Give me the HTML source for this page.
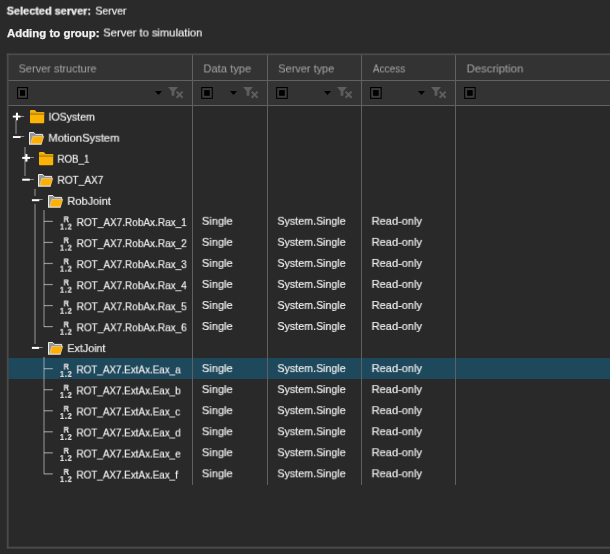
<!DOCTYPE html><html><head><meta charset='utf-8'><title>Server structure</title><style>
html,body{margin:0;padding:0;}
body{width:610px;height:554px;background:#2a2a2a;overflow:hidden;position:relative;font-family:"Liberation Sans",sans-serif;font-size:12px;color:#f1f1f1;}
.a{position:absolute;}
.t{position:absolute;left:0;top:0;will-change:transform;white-space:nowrap;font-size:11.4px;line-height:14px;height:14px;transform-origin:0 0;-webkit-text-stroke:0.18px currentColor;}
.b{font-weight:bold;-webkit-text-stroke:0.25px #f1f1f1;}
.h{color:#a8a8a8;-webkit-text-stroke:0;}
.ln{position:absolute;background:#606060;}
.tl{position:absolute;background:#989898;}.tx{position:absolute;background:#808080;}.vl{position:absolute;background:rgba(255,255,255,0.26);}
.w{position:absolute;background:#ffffff;}
.cb{position:absolute;width:9px;height:10px;border:1px solid #000;background:#3e3e3e;}
.cb i{position:absolute;left:2px;top:2px;width:5px;height:6px;background:#000;}
.ic{position:absolute;left:0;top:0;transform-origin:0 0;will-change:transform;font-weight:bold;font-size:8px;line-height:8px;color:#e6e6e6;white-space:nowrap;text-shadow:0 0 1px #000;-webkit-text-stroke:0.2px #e6e6e6;}
</style></head><body>
<span class='t b' style='transform:translate(6.73px,3.60px) scaleX(0.9578)'>Selected server:</span>
<span class='t ' style='transform:translate(95.38px,3.60px) scaleX(0.9253)'>Server</span>
<span class='t b' style='transform:translate(6.91px,25.50px) scaleX(1.0033)'>Adding to group:</span>
<span class='t ' style='transform:translate(103.23px,25.50px) scaleX(0.9847)'>Server to simulation</span>
<div class='a' style='left:7px;top:54px;width:603px;height:495px;background:#292929'></div>
<div class='a' style='left:7px;top:54px;width:603px;height:52px;background:#333333'></div>
<div class='ln' style='left:7px;top:80px;width:603px;height:1px'></div>
<div class='ln' style='left:7px;top:105px;width:603px;height:1px'></div>
<div class='a' style='left:8px;top:358px;width:602px;height:21px;background:#1e485c'></div>
<div class='ln' style='left:192px;top:54px;width:1px;height:431px'></div>
<div class='ln' style='left:267px;top:54px;width:1px;height:431px'></div>
<div class='ln' style='left:361px;top:54px;width:1px;height:431px'></div>
<div class='ln' style='left:455px;top:54px;width:1px;height:431px'></div>
<span class='t h' style='transform:translate(18.62px,61.40px) scaleX(0.9602)'>Server structure</span>
<span class='t h' style='transform:translate(203.40px,61.40px) scaleX(0.9793)'>Data type</span>
<span class='t h' style='transform:translate(278.28px,61.40px) scaleX(0.9604)'>Server type</span>
<span class='t h' style='transform:translate(372.82px,61.40px) scaleX(0.8845)'>Access</span>
<span class='t h' style='transform:translate(466.60px,61.40px) scaleX(0.9948)'>Description</span>
<svg class='a' style='left:155px;top:91px' width='7' height='4' viewBox='0 0 7 4'><path d='M0 0H7L3.5 4Z' fill='#000'/></svg>
<svg class='a' style='left:168px;top:87px' width='16' height='12' viewBox='0 0 16 12'><path d='M0 0H10L6.4 4.2V8.8H3.6V4.2Z' fill='#5e5e5e'/><path d='M8.6 4.6L14.6 10.8M14.6 4.6L8.6 10.8' stroke='#5e5e5e' stroke-width='2' fill='none'/></svg>
<svg class='a' style='left:230px;top:91px' width='7' height='4' viewBox='0 0 7 4'><path d='M0 0H7L3.5 4Z' fill='#000'/></svg>
<svg class='a' style='left:243px;top:87px' width='16' height='12' viewBox='0 0 16 12'><path d='M0 0H10L6.4 4.2V8.8H3.6V4.2Z' fill='#5e5e5e'/><path d='M8.6 4.6L14.6 10.8M14.6 4.6L8.6 10.8' stroke='#5e5e5e' stroke-width='2' fill='none'/></svg>
<svg class='a' style='left:324px;top:91px' width='7' height='4' viewBox='0 0 7 4'><path d='M0 0H7L3.5 4Z' fill='#000'/></svg>
<svg class='a' style='left:337px;top:87px' width='16' height='12' viewBox='0 0 16 12'><path d='M0 0H10L6.4 4.2V8.8H3.6V4.2Z' fill='#5e5e5e'/><path d='M8.6 4.6L14.6 10.8M14.6 4.6L8.6 10.8' stroke='#5e5e5e' stroke-width='2' fill='none'/></svg>
<svg class='a' style='left:418px;top:91px' width='7' height='4' viewBox='0 0 7 4'><path d='M0 0H7L3.5 4Z' fill='#000'/></svg>
<svg class='a' style='left:431px;top:87px' width='16' height='12' viewBox='0 0 16 12'><path d='M0 0H10L6.4 4.2V8.8H3.6V4.2Z' fill='#5e5e5e'/><path d='M8.6 4.6L14.6 10.8M14.6 4.6L8.6 10.8' stroke='#5e5e5e' stroke-width='2' fill='none'/></svg>
<div class='vl' style='left:15px;top:120px;width:2px;height:14px'></div>
<div class='vl' style='left:24px;top:147px;width:2px;height:29px'></div>
<div class='vl' style='left:34px;top:189px;width:2px;height:7px'></div>
<div class='vl' style='left:34px;top:204px;width:2px;height:140px'></div>
<div class='vl' style='left:43px;top:210px;width:2px;height:117px'></div>
<div class='vl' style='left:43px;top:357px;width:2px;height:117px'></div>
<svg class='a' style='left:29.8px;top:109.9px' width='15' height='14' viewBox='0 0 15 14'><path d='M0 1Q0 0 1 0H4.7L6.7 2H13.2Q14.2 2 14.2 3V12.2Q14.2 13.2 13.2 13.2H1Q0 13.2 0 12.2Z' fill='#fdb206'/><rect x='0' y='2.2' width='14.2' height='1.1' fill='#e6a404'/><rect x='0' y='3.3' width='14.2' height='1.7' fill='#bd8d10'/></svg>
<span class='t ' style='transform:translate(48.47px,109.67px) scaleX(0.9275)'>IOSystem</span>
<svg class='a' style='left:29.0px;top:131.5px' width='16' height='14' viewBox='0 0 16 14'><path d='M0.5 12.2V0.5H4.8L6.6 2.4H13.7V4.6L12.8 12.2Z' fill='#969696'/><path d='M0.5 12.4V0.5H4.8L6.6 2.4H13.7V4.6' fill='none' stroke='#ececec' stroke-width='1' stroke-linejoin='round'/><path d='M0.2 12.2H12.6' stroke='#e4e4ec' stroke-width='1'/><path d='M3.9 4.4H14.8L12.5 11.7H1.7Z' fill='#ffb000' stroke='#f3e6c6' stroke-width='0.5'/></svg>
<span class='t ' style='transform:translate(48.40px,130.71px) scaleX(0.9841)'>MotionSystem</span>
<svg class='a' style='left:39.2px;top:152.0px' width='15' height='14' viewBox='0 0 15 14'><path d='M0 1Q0 0 1 0H4.7L6.7 2H13.2Q14.2 2 14.2 3V12.2Q14.2 13.2 13.2 13.2H1Q0 13.2 0 12.2Z' fill='#fdb206'/><rect x='0' y='2.2' width='14.2' height='1.1' fill='#e6a404'/><rect x='0' y='3.3' width='14.2' height='1.7' fill='#bd8d10'/></svg>
<span class='t ' style='transform:translate(57.50px,151.75px) scaleX(0.8549)'>ROB_1</span>
<svg class='a' style='left:38.4px;top:173.6px' width='16' height='14' viewBox='0 0 16 14'><path d='M0.5 12.2V0.5H4.8L6.6 2.4H13.7V4.6L12.8 12.2Z' fill='#969696'/><path d='M0.5 12.4V0.5H4.8L6.6 2.4H13.7V4.6' fill='none' stroke='#ececec' stroke-width='1' stroke-linejoin='round'/><path d='M0.2 12.2H12.6' stroke='#e4e4ec' stroke-width='1'/><path d='M3.9 4.4H14.8L12.5 11.7H1.7Z' fill='#ffb000' stroke='#f3e6c6' stroke-width='0.5'/></svg>
<span class='t ' style='transform:translate(57.50px,172.79px) scaleX(0.8827)'>ROT_AX7</span>
<svg class='a' style='left:47.8px;top:194.6px' width='16' height='14' viewBox='0 0 16 14'><path d='M0.5 12.2V0.5H4.8L6.6 2.4H13.7V4.6L12.8 12.2Z' fill='#969696'/><path d='M0.5 12.4V0.5H4.8L6.6 2.4H13.7V4.6' fill='none' stroke='#ececec' stroke-width='1' stroke-linejoin='round'/><path d='M0.2 12.2H12.6' stroke='#e4e4ec' stroke-width='1'/><path d='M3.9 4.4H14.8L12.5 11.7H1.7Z' fill='#ffb000' stroke='#f3e6c6' stroke-width='0.5'/></svg>
<span class='t ' style='transform:translate(67.40px,193.83px) scaleX(0.9659)'>RobJoint</span>
<span class='ic' style='font-size:8.5px;transform:translate(63.6px,215.30px) scaleX(0.86)'>R</span>
<span class='ic' style='font-size:8.5px;letter-spacing:0.9px;transform:translate(59.9px,222.60px) scaleX(0.86)'>1.2</span>
<span class='t ' style='transform:translate(76.66px,215.10px) scaleX(0.8782)'>ROT_AX7.RobAx.Rax_1</span>
<span class='t ' style='transform:translate(201.80px,213.80px) scaleX(0.9789)'>Single</span>
<span class='t ' style='transform:translate(277.44px,213.80px) scaleX(0.9364)'>System.Single</span>
<span class='t ' style='transform:translate(371.65px,213.80px) scaleX(0.9704)'>Read-only</span>
<span class='ic' style='font-size:8.5px;transform:translate(63.6px,236.34px) scaleX(0.86)'>R</span>
<span class='ic' style='font-size:8.5px;letter-spacing:0.9px;transform:translate(59.9px,243.64px) scaleX(0.86)'>1.2</span>
<span class='t ' style='transform:translate(76.66px,236.14px) scaleX(0.8782)'>ROT_AX7.RobAx.Rax_2</span>
<span class='t ' style='transform:translate(201.80px,234.84px) scaleX(0.9789)'>Single</span>
<span class='t ' style='transform:translate(277.44px,234.84px) scaleX(0.9364)'>System.Single</span>
<span class='t ' style='transform:translate(371.65px,234.84px) scaleX(0.9704)'>Read-only</span>
<span class='ic' style='font-size:8.5px;transform:translate(63.6px,257.38px) scaleX(0.86)'>R</span>
<span class='ic' style='font-size:8.5px;letter-spacing:0.9px;transform:translate(59.9px,264.68px) scaleX(0.86)'>1.2</span>
<span class='t ' style='transform:translate(76.66px,257.18px) scaleX(0.8782)'>ROT_AX7.RobAx.Rax_3</span>
<span class='t ' style='transform:translate(201.80px,255.88px) scaleX(0.9789)'>Single</span>
<span class='t ' style='transform:translate(277.44px,255.88px) scaleX(0.9364)'>System.Single</span>
<span class='t ' style='transform:translate(371.65px,255.88px) scaleX(0.9704)'>Read-only</span>
<span class='ic' style='font-size:8.5px;transform:translate(63.6px,278.42px) scaleX(0.86)'>R</span>
<span class='ic' style='font-size:8.5px;letter-spacing:0.9px;transform:translate(59.9px,285.72px) scaleX(0.86)'>1.2</span>
<span class='t ' style='transform:translate(76.66px,278.22px) scaleX(0.8782)'>ROT_AX7.RobAx.Rax_4</span>
<span class='t ' style='transform:translate(201.80px,276.92px) scaleX(0.9789)'>Single</span>
<span class='t ' style='transform:translate(277.44px,276.92px) scaleX(0.9364)'>System.Single</span>
<span class='t ' style='transform:translate(371.65px,276.92px) scaleX(0.9704)'>Read-only</span>
<span class='ic' style='font-size:8.5px;transform:translate(63.6px,299.46px) scaleX(0.86)'>R</span>
<span class='ic' style='font-size:8.5px;letter-spacing:0.9px;transform:translate(59.9px,306.76px) scaleX(0.86)'>1.2</span>
<span class='t ' style='transform:translate(76.66px,299.26px) scaleX(0.8782)'>ROT_AX7.RobAx.Rax_5</span>
<span class='t ' style='transform:translate(201.80px,297.96px) scaleX(0.9789)'>Single</span>
<span class='t ' style='transform:translate(277.44px,297.96px) scaleX(0.9364)'>System.Single</span>
<span class='t ' style='transform:translate(371.65px,297.96px) scaleX(0.9704)'>Read-only</span>
<span class='ic' style='font-size:8.5px;transform:translate(63.6px,320.50px) scaleX(0.86)'>R</span>
<span class='ic' style='font-size:8.5px;letter-spacing:0.9px;transform:translate(59.9px,327.80px) scaleX(0.86)'>1.2</span>
<span class='t ' style='transform:translate(76.66px,320.30px) scaleX(0.8782)'>ROT_AX7.RobAx.Rax_6</span>
<span class='t ' style='transform:translate(201.80px,319.00px) scaleX(0.9789)'>Single</span>
<span class='t ' style='transform:translate(277.44px,319.00px) scaleX(0.9364)'>System.Single</span>
<span class='t ' style='transform:translate(371.65px,319.00px) scaleX(0.9704)'>Read-only</span>
<svg class='a' style='left:47.8px;top:341.9px' width='16' height='14' viewBox='0 0 16 14'><path d='M0.5 12.2V0.5H4.8L6.6 2.4H13.7V4.6L12.8 12.2Z' fill='#969696'/><path d='M0.5 12.4V0.5H4.8L6.6 2.4H13.7V4.6' fill='none' stroke='#ececec' stroke-width='1' stroke-linejoin='round'/><path d='M0.2 12.2H12.6' stroke='#e4e4ec' stroke-width='1'/><path d='M3.9 4.4H14.8L12.5 11.7H1.7Z' fill='#ffb000' stroke='#f3e6c6' stroke-width='0.5'/></svg>
<span class='t ' style='transform:translate(67.40px,341.11px) scaleX(0.9379)'>ExtJoint</span>
<span class='ic' style='font-size:8.5px;transform:translate(63.6px,362.58px) scaleX(0.86)'>R</span>
<span class='ic' style='font-size:8.5px;letter-spacing:0.9px;transform:translate(59.9px,369.88px) scaleX(0.86)'>1.2</span>
<span class='t ' style='transform:translate(76.52px,362.38px) scaleX(0.8658)'>ROT_AX7.ExtAx.Eax_a</span>
<span class='t ' style='transform:translate(201.80px,361.08px) scaleX(0.9789)'>Single</span>
<span class='t ' style='transform:translate(277.44px,361.08px) scaleX(0.9364)'>System.Single</span>
<span class='t ' style='transform:translate(371.65px,361.08px) scaleX(0.9704)'>Read-only</span>
<span class='ic' style='font-size:8.5px;transform:translate(63.6px,383.62px) scaleX(0.86)'>R</span>
<span class='ic' style='font-size:8.5px;letter-spacing:0.9px;transform:translate(59.9px,390.92px) scaleX(0.86)'>1.2</span>
<span class='t ' style='transform:translate(76.52px,383.42px) scaleX(0.8658)'>ROT_AX7.ExtAx.Eax_b</span>
<span class='t ' style='transform:translate(201.80px,382.12px) scaleX(0.9789)'>Single</span>
<span class='t ' style='transform:translate(277.44px,382.12px) scaleX(0.9364)'>System.Single</span>
<span class='t ' style='transform:translate(371.65px,382.12px) scaleX(0.9704)'>Read-only</span>
<span class='ic' style='font-size:8.5px;transform:translate(63.6px,404.66px) scaleX(0.86)'>R</span>
<span class='ic' style='font-size:8.5px;letter-spacing:0.9px;transform:translate(59.9px,411.96px) scaleX(0.86)'>1.2</span>
<span class='t ' style='transform:translate(76.52px,404.46px) scaleX(0.8658)'>ROT_AX7.ExtAx.Eax_c</span>
<span class='t ' style='transform:translate(201.80px,403.16px) scaleX(0.9789)'>Single</span>
<span class='t ' style='transform:translate(277.44px,403.16px) scaleX(0.9364)'>System.Single</span>
<span class='t ' style='transform:translate(371.65px,403.16px) scaleX(0.9704)'>Read-only</span>
<span class='ic' style='font-size:8.5px;transform:translate(63.6px,425.70px) scaleX(0.86)'>R</span>
<span class='ic' style='font-size:8.5px;letter-spacing:0.9px;transform:translate(59.9px,433.00px) scaleX(0.86)'>1.2</span>
<span class='t ' style='transform:translate(76.52px,425.50px) scaleX(0.8658)'>ROT_AX7.ExtAx.Eax_d</span>
<span class='t ' style='transform:translate(201.80px,424.20px) scaleX(0.9789)'>Single</span>
<span class='t ' style='transform:translate(277.44px,424.20px) scaleX(0.9364)'>System.Single</span>
<span class='t ' style='transform:translate(371.65px,424.20px) scaleX(0.9704)'>Read-only</span>
<span class='ic' style='font-size:8.5px;transform:translate(63.6px,446.74px) scaleX(0.86)'>R</span>
<span class='ic' style='font-size:8.5px;letter-spacing:0.9px;transform:translate(59.9px,454.04px) scaleX(0.86)'>1.2</span>
<span class='t ' style='transform:translate(76.52px,446.54px) scaleX(0.8658)'>ROT_AX7.ExtAx.Eax_e</span>
<span class='t ' style='transform:translate(201.80px,445.24px) scaleX(0.9789)'>Single</span>
<span class='t ' style='transform:translate(277.44px,445.24px) scaleX(0.9364)'>System.Single</span>
<span class='t ' style='transform:translate(371.65px,445.24px) scaleX(0.9704)'>Read-only</span>
<span class='ic' style='font-size:8.5px;transform:translate(63.6px,467.78px) scaleX(0.86)'>R</span>
<span class='ic' style='font-size:8.5px;letter-spacing:0.9px;transform:translate(59.9px,475.08px) scaleX(0.86)'>1.2</span>
<span class='t ' style='transform:translate(76.52px,467.58px) scaleX(0.8658)'>ROT_AX7.ExtAx.Eax_f</span>
<span class='t ' style='transform:translate(201.80px,466.28px) scaleX(0.9789)'>Single</span>
<span class='t ' style='transform:translate(277.44px,466.28px) scaleX(0.9364)'>System.Single</span>
<span class='t ' style='transform:translate(371.65px,466.28px) scaleX(0.9704)'>Read-only</span>
<svg class='a' style='left:0;top:0' width='610' height='554' viewBox='0 0 610 554'><rect x='6.8' y='53.4' width='604' height='1.8' fill='#4b4b4b'/><rect x='6.8' y='546.7' width='604' height='1.9' fill='#4b4b4b'/><rect x='6.8' y='53.4' width='1.8' height='495.2' fill='#4b4b4b'/><rect x='17.0' y='87' width='11.0' height='11.9' fill='#000'/><rect x='18.1' y='88.1' width='8.8' height='9.7' fill='#3b3b3b'/><rect x='20.0' y='90.1' width='5.0' height='5.7' fill='#000'/><rect x='201.2' y='87' width='11.6' height='11.9' fill='#000'/><rect x='202.29999999999998' y='88.1' width='9.4' height='9.7' fill='#3b3b3b'/><rect x='204.2' y='90.1' width='5.6' height='5.7' fill='#000'/><rect x='276.1' y='87' width='11.7' height='11.9' fill='#000'/><rect x='277.20000000000005' y='88.1' width='9.5' height='9.7' fill='#3b3b3b'/><rect x='279.1' y='90.1' width='5.7' height='5.7' fill='#000'/><rect x='370.1' y='87' width='11.6' height='11.9' fill='#000'/><rect x='371.20000000000005' y='88.1' width='9.4' height='9.7' fill='#3b3b3b'/><rect x='373.1' y='90.1' width='5.6' height='5.7' fill='#000'/><rect x='464.1' y='87' width='11.6' height='11.9' fill='#000'/><rect x='465.20000000000005' y='88.1' width='9.4' height='9.7' fill='#3b3b3b'/><rect x='467.1' y='90.1' width='5.6' height='5.7' fill='#000'/><rect x='20.0' y='116' width='4.1' height='1' fill='#8a8a8a'/><rect x='12.8' y='115.6' width='7.7' height='1.9' fill='#fff'/><rect x='15.90' y='112.75' width='2.1' height='7.5' fill='#fff'/><rect x='20.0' y='136' width='4.2' height='1' fill='#8a8a8a'/><rect x='12.9' y='136.1' width='7.6' height='1.9' fill='#fff'/><rect x='29.5' y='157' width='4.5' height='1' fill='#8a8a8a'/><rect x='22.2' y='156.9' width='7.8' height='2.0' fill='#fff'/><rect x='25.35' y='154.10' width='2.1' height='7.5' fill='#fff'/><rect x='29.3' y='179' width='4.7' height='1' fill='#8a8a8a'/><rect x='22.2' y='178.7' width='7.6' height='2.0' fill='#fff'/><rect x='38.8' y='199' width='4.0' height='1' fill='#8a8a8a'/><rect x='31.9' y='199.2' width='7.4' height='2.0' fill='#fff'/><rect x='44' y='220.80' width='8.8' height='1.2' fill='#fff' fill-opacity='0.5'/><rect x='44' y='241.84' width='8.8' height='1.2' fill='#fff' fill-opacity='0.5'/><rect x='44' y='262.88' width='8.8' height='1.2' fill='#fff' fill-opacity='0.5'/><rect x='44' y='283.92' width='8.8' height='1.2' fill='#fff' fill-opacity='0.5'/><rect x='44' y='304.96' width='8.8' height='1.2' fill='#fff' fill-opacity='0.5'/><rect x='44' y='326.00' width='8.8' height='1.2' fill='#fff' fill-opacity='0.5'/><rect x='38.6' y='347' width='4.2' height='1' fill='#8a8a8a'/><rect x='31.9' y='346.9' width='7.2' height='2.0' fill='#fff'/><rect x='44' y='368.08' width='8.8' height='1.2' fill='#fff' fill-opacity='0.5'/><rect x='44' y='389.12' width='8.8' height='1.2' fill='#fff' fill-opacity='0.5'/><rect x='44' y='410.16' width='8.8' height='1.2' fill='#fff' fill-opacity='0.5'/><rect x='44' y='431.20' width='8.8' height='1.2' fill='#fff' fill-opacity='0.5'/><rect x='44' y='452.24' width='8.8' height='1.2' fill='#fff' fill-opacity='0.5'/><rect x='44' y='473.28' width='8.8' height='1.2' fill='#fff' fill-opacity='0.5'/></svg>
</body></html>
